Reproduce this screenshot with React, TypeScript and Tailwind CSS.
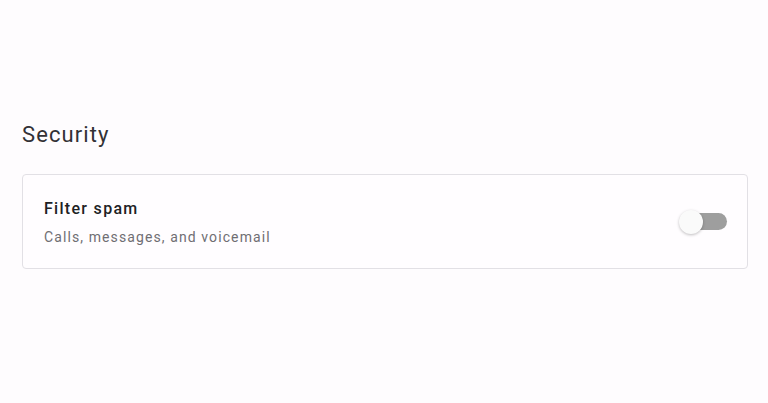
import React, { useState } from 'react'

const Toggle = ({ on, onChange }: { on: boolean; onChange: (v: boolean) => void }) => (
  <button
    onClick={() => onChange(!on)}
    className="relative flex items-center w-[40px] h-[24px] shrink-0"
    aria-pressed={on}
  >
    <span className={`absolute left-[2px] right-0 h-[17px] rounded-full ${on ? 'bg-[#a8c7fa]' : 'bg-[#9e9e9e]'}`}></span>
    <span
      className={`absolute top-[0px] w-[24px] h-[24px] rounded-full shadow-[0_1px_3px_rgba(0,0,0,0.25)] ${on ? 'left-[18px] bg-[#1a73e8]' : 'left-[-8px] bg-[#fafafa]'}`}
    ></span>
  </button>
)

export default function App() {
  const [spam, setSpam] = useState(false)
  return (
    <div className="w-full h-[403px] bg-[#fefcfe] font-['Roboto',sans-serif]">
      <div className="pt-[121px] pl-[22px] pr-[20px]">
        <h2 className="text-[22px] leading-[28px] text-[#323135] tracking-[1.1px]">Security</h2>
        <div className="mt-[25px] border border-[#e2e0e5] rounded-[4px] bg-[#fffdff] h-[95px] flex items-center justify-between pl-[21px] pr-[20px]">
          <div className="flex flex-col pt-[2px]">
            <div className="text-[16px] leading-[20px] font-medium text-[#202124] tracking-[1.3px]">Filter spam</div>
            <div className="mt-[8px] text-[14px] leading-[20px] text-[#6f6e73] tracking-[1.1px]">Calls, messages, and voicemail</div>
          </div>
          <Toggle on={spam} onChange={setSpam} />
        </div>
      </div>
    </div>
  )
}
